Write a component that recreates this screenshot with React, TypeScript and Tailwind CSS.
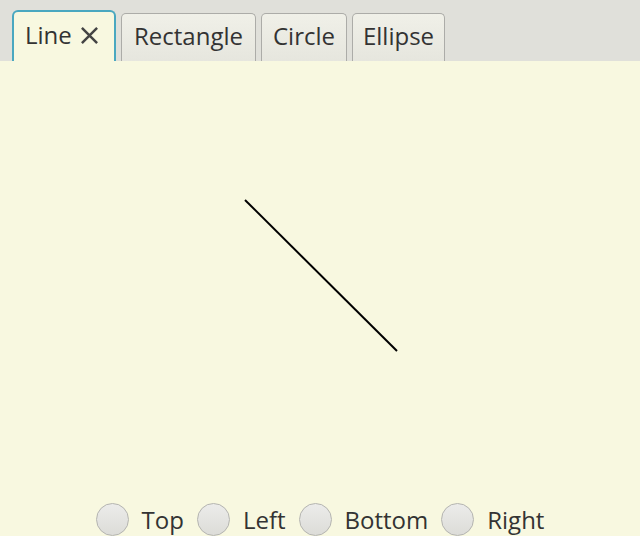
import React from "react";

function Radio({ label }: { label: string }) {
  return (
    <div className="flex items-center gap-[13px]">
      <div className="w-[33px] h-[33px] rounded-full border border-[#b4b4b0] bg-gradient-to-b from-[#ececea] to-[#dcdcd8] shrink-0" />
      <span className="text-[24px] leading-none text-[#333]">{label}</span>
    </div>
  );
}

function Tab({ label, w }: { label: string; w: string }) {
  return (
    <div className={`${w} h-[48px] pb-[4px] flex items-center justify-center border border-b-0 border-[#acaca8] rounded-t-[5px] bg-gradient-to-b from-[#f0f0e8] to-[#e6e6de] text-[24px] text-[#333] leading-none`}>
      {label}
    </div>
  );
}

export default function App() {
  return (
    <div
      className="w-[640px] h-[536px] overflow-hidden flex flex-col bg-[#f8f8e0]"
      style={{ fontFamily: '"Open Sans", "Noto Sans", sans-serif' }}
    >
      <div className="h-[61px] shrink-0 bg-[#e0e0da] flex items-end pl-[12px] gap-[5px]">
        <div className="w-[104px] h-[51px] pl-[11px] pb-[4px] flex items-center gap-[8px] border-2 border-b-0 border-[#4aa8c0] rounded-t-[6px] bg-[#f8f8e0] text-[24px] text-[#333] leading-none">
          <span>Line</span>
          <svg width="19" height="19" viewBox="0 0 20 20" className="mt-[2px]">
            <path d="M2 2 L18 18 M18 2 L2 18" stroke="#444" strokeWidth="2.6" />
          </svg>
        </div>
        <Tab label="Rectangle" w="w-[135px]" />
        <Tab label="Circle" w="w-[86px]" />
        <Tab label="Ellipse" w="w-[93px]" />
      </div>
      <div className="h-[442px] shrink-0 relative">
        <svg className="absolute inset-0" width="640" height="442">
          <line x1="245" y1="139" x2="397" y2="290" stroke="#000" strokeWidth="2" />
        </svg>
      </div>
      <div className="flex items-start justify-center gap-[13px]">
        <Radio label="Top" />
        <Radio label="Left" />
        <Radio label="Bottom" />
        <Radio label="Right" />
      </div>
    </div>
  );
}
